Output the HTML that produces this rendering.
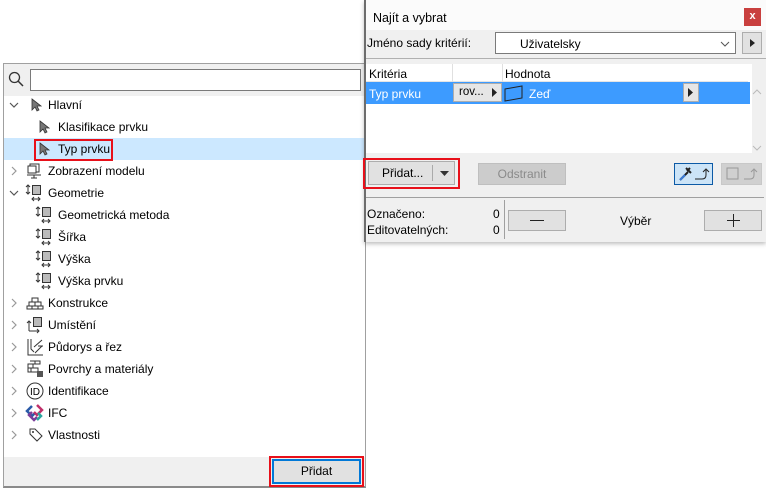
<!DOCTYPE html>
<html><head><meta charset="utf-8"><style>
*{box-sizing:border-box;margin:0;padding:0}
body{width:766px;height:488px;background:#fff;position:relative;overflow:hidden;font-family:"Liberation Sans",sans-serif;font-size:12px;color:#000}
.a{position:absolute}
.row{position:absolute;left:4px;width:360px;height:22px;line-height:22px;white-space:nowrap}
.chev{position:absolute;top:0;width:10px;height:22px}
.btn{position:absolute;background:#e1e1e1;border:1px solid #adadad;text-align:center}
</style></head><body>
<div class="a" style="left:3px;top:63px;width:363px;height:425px;border:1px solid #a0a0a0;border-bottom:2px solid #8a8a8a;background:#fff"></div>
<div class="a" style="left:4px;top:64px;width:361px;height:32px;background:#f0f0f0"></div>
<svg class="a" style="left:7px;top:70px" width="18" height="18"><circle cx="7.5" cy="7.5" r="5" fill="none" stroke="#333" stroke-width="1.3"/><line x1="11" y1="11" x2="16" y2="16" stroke="#333" stroke-width="1.5"/></svg>
<div class="a" style="left:30px;top:69px;width:331px;height:22px;border:1px solid #7a7a7a;background:#fff"></div>
<div class="a" style="left:4px;top:138px;width:361px;height:22px;background:#cce8ff"></div>
<div class="a" style="left:34px;top:139px;width:79px;height:22px;border:2px solid #e8101a"></div>

<div class="row" style="top:94px"><svg class="chev" style="left:5px" viewBox="0 0 10 22"><path d="M1 9l4 4 4-4" fill="none" stroke="#555" stroke-width="1.2"/></svg>
<svg class="a" style="left:26px;top:4px" width="12" height="14"><path d="M2 1v11l3-3 2 4 2-1-2-4h4z" fill="#777" stroke="#333" stroke-width=".8"/></svg><span class="a" style="left:44px">Hlavní</span></div>
<div class="row" style="top:116px"><svg class="a" style="left:34px;top:4px" width="12" height="14"><path d="M2 1v11l3-3 2 4 2-1-2-4h4z" fill="#777" stroke="#333" stroke-width=".8"/></svg><span class="a" style="left:54px">Klasifikace prvku</span></div>
<div class="row" style="top:138px"><svg class="a" style="left:34px;top:4px" width="12" height="14"><path d="M2 1v11l3-3 2 4 2-1-2-4h4z" fill="#777" stroke="#333" stroke-width=".8"/></svg><span class="a" style="left:54px">Typ prvku</span></div>
<div class="row" style="top:160px"><svg class="chev" style="left:5px" viewBox="0 0 10 22"><path d="M3 7l4 4-4 4" fill="none" stroke="#999" stroke-width="1.2"/></svg>
<svg class="a" style="left:22px;top:3px" width="16" height="16"><rect x="4" y="1" width="9" height="8" fill="none" stroke="#333"/><rect x="2" y="3" width="8" height="7" fill="#fff" stroke="#333"/><path d="M1 12h14M8 12v3M5 15h6" stroke="#333" fill="none"/></svg><span class="a" style="left:44px">Zobrazení modelu</span></div>
<div class="row" style="top:182px"><svg class="chev" style="left:5px" viewBox="0 0 10 22"><path d="M1 9l4 4 4-4" fill="none" stroke="#555" stroke-width="1.2"/></svg>
<svg class="a" style="left:21px;top:2px" width="18" height="18"><path d="M3 1v9M1 3l2-2 2 2M1 8l2 2 2-2M7 15h8M9 13l-2 2 2 2M13 13l2 2-2 2" stroke="#333" fill="none"/><rect x="7.5" y="1.5" width="8" height="9" fill="#bbb" stroke="#333"/></svg><span class="a" style="left:44px">Geometrie</span></div>
<div class="row" style="top:204px"><svg class="a" style="left:31px;top:2px" width="18" height="18"><path d="M3 1v9M1 3l2-2 2 2M1 8l2 2 2-2M7 15h8M9 13l-2 2 2 2M13 13l2 2-2 2" stroke="#333" fill="none"/><rect x="7.5" y="1.5" width="8" height="9" fill="#bbb" stroke="#333"/></svg><span class="a" style="left:54px">Geometrická metoda</span></div>
<div class="row" style="top:226px"><svg class="a" style="left:31px;top:2px" width="18" height="18"><path d="M3 1v9M1 3l2-2 2 2M1 8l2 2 2-2M7 15h8M9 13l-2 2 2 2M13 13l2 2-2 2" stroke="#333" fill="none"/><rect x="7.5" y="1.5" width="8" height="9" fill="#bbb" stroke="#333"/></svg><span class="a" style="left:54px">Šířka</span></div>
<div class="row" style="top:248px"><svg class="a" style="left:31px;top:2px" width="18" height="18"><path d="M3 1v9M1 3l2-2 2 2M1 8l2 2 2-2M7 15h8M9 13l-2 2 2 2M13 13l2 2-2 2" stroke="#333" fill="none"/><rect x="7.5" y="1.5" width="8" height="9" fill="#bbb" stroke="#333"/></svg><span class="a" style="left:54px">Výška</span></div>
<div class="row" style="top:270px"><svg class="a" style="left:31px;top:2px" width="18" height="18"><path d="M3 1v9M1 3l2-2 2 2M1 8l2 2 2-2M7 15h8M9 13l-2 2 2 2M13 13l2 2-2 2" stroke="#333" fill="none"/><rect x="7.5" y="1.5" width="8" height="9" fill="#bbb" stroke="#333"/></svg><span class="a" style="left:54px">Výška prvku</span></div>
<div class="row" style="top:292px"><svg class="chev" style="left:5px" viewBox="0 0 10 22"><path d="M3 7l4 4-4 4" fill="none" stroke="#999" stroke-width="1.2"/></svg>
<svg class="a" style="left:22px;top:4px" width="18" height="14"><path d="M6 2h6v4H6zM3 6h12v4H3zM1 10h16v3H1zM9 6v4M6 10v3M12 10v3" fill="none" stroke="#333"/></svg><span class="a" style="left:44px">Konstrukce</span></div>
<div class="row" style="top:314px"><svg class="chev" style="left:5px" viewBox="0 0 10 22"><path d="M3 7l4 4-4 4" fill="none" stroke="#999" stroke-width="1.2"/></svg>
<svg class="a" style="left:22px;top:2px" width="18" height="18"><rect x="7.5" y="1.5" width="8" height="9" fill="#bbb" stroke="#333"/><path d="M3 15V5M1 7l2-2 2 2M3 15h10M11 13l2 2-2 2" stroke="#333" fill="none"/></svg><span class="a" style="left:44px">Umístění</span></div>
<div class="row" style="top:336px"><svg class="chev" style="left:5px" viewBox="0 0 10 22"><path d="M3 7l4 4-4 4" fill="none" stroke="#999" stroke-width="1.2"/></svg>
<svg class="a" style="left:22px;top:2px" width="18" height="18"><path d="M2 1v16h15M5 1v10l3 3M8 9l8-7M9 15l7-7M12 8h5" stroke="#333" fill="none"/></svg><span class="a" style="left:44px">Půdorys a řez</span></div>
<div class="row" style="top:358px"><svg class="chev" style="left:5px" viewBox="0 0 10 22"><path d="M3 7l4 4-4 4" fill="none" stroke="#999" stroke-width="1.2"/></svg>
<svg class="a" style="left:22px;top:2px" width="18" height="18"><path d="M4 1h10v3H2v4h10v4H2V4M7 4v4M5 8v4M9 1v3" fill="none" stroke="#333"/><rect x="11" y="11" width="6" height="6" fill="#555"/></svg><span class="a" style="left:44px">Povrchy a materiály</span></div>
<div class="row" style="top:380px"><svg class="chev" style="left:5px" viewBox="0 0 10 22"><path d="M3 7l4 4-4 4" fill="none" stroke="#999" stroke-width="1.2"/></svg>
<svg class="a" style="left:22px;top:2px" width="18" height="18"><circle cx="9" cy="9" r="8" fill="none" stroke="#333"/><text x="9" y="13" font-size="10" text-anchor="middle" font-family="Liberation Sans">ID</text></svg><span class="a" style="left:44px">Identifikace</span></div>
<div class="row" style="top:402px"><svg class="chev" style="left:5px" viewBox="0 0 10 22"><path d="M3 7l4 4-4 4" fill="none" stroke="#999" stroke-width="1.2"/></svg>
<svg class="a" style="left:21px;top:2px" width="20" height="18"><path d="M7 2l-5 5 5 5 3-3" fill="none" stroke="#2a5ba8" stroke-width="2.5"/><path d="M12 1l5 5-5 5-3-3" fill="none" stroke="#c0306a" stroke-width="2.5"/><path d="M7 8l-3 3 5 5 3-3" fill="none" stroke="#7a3d9a" stroke-width="2.5"/><path d="M13 9l3 3-4 4" fill="none" stroke="#2aa6a0" stroke-width="2.5"/></svg><span class="a" style="left:44px">IFC</span></div>
<div class="row" style="top:424px"><svg class="chev" style="left:5px" viewBox="0 0 10 22"><path d="M3 7l4 4-4 4" fill="none" stroke="#999" stroke-width="1.2"/></svg>
<svg class="a" style="left:24px;top:3px" width="16" height="16"><path d="M2 2h5l7 7-5 5-7-7z" fill="none" stroke="#333"/><circle cx="5" cy="5" r="1" fill="#333"/></svg><span class="a" style="left:44px">Vlastnosti</span></div>

<div class="a" style="left:4px;top:457px;width:361px;height:29px;background:#f0f0f0"></div>
<div class="a" style="left:269px;top:456px;width:95px;height:31px;border:2px solid #e8101a"></div>
<div class="a" style="left:272px;top:459px;width:89px;height:25px;border:2px solid #0078d7;background:#e1e1e1;text-align:center;line-height:21px">Přidat</div>

<div class="a" style="left:364px;top:0;width:402px;height:242px;background:#f0f0f0;border-left:2px solid #6d6d6d;box-shadow:0 2px 4px rgba(0,0,0,.25)"></div>
<div class="a" style="left:366px;top:0;width:400px;height:30px;background:#fbfbfb"></div>
<div class="a" style="left:373px;top:11px;font-size:12.5px">Najít a vybrat</div>
<div class="a" style="left:744px;top:8px;width:17px;height:18px;background:#c9403f;color:#fff;text-align:center;line-height:17px;font-size:11px;font-weight:bold">x</div>
<div class="a" style="left:367px;top:36px">Jméno sady kritérií:</div>
<div class="a" style="left:495px;top:32px;width:241px;height:22px;border:1px solid #7a7a7a;background:#fff"><span class="a" style="left:24px;top:4px">Uživatelsky</span><svg class="a" style="left:224px;top:8px" width="10" height="6"><path d="M1 1l4 4 4-4" fill="none" stroke="#555"/></svg></div>
<div class="btn" style="left:742px;top:32px;width:20px;height:22px"><svg width="18" height="20"><path d="M7 6l5 4-5 4z" fill="#222"/></svg></div>
<div class="a" style="left:366px;top:58px;width:400px;height:1px;background:#b0b0b0"></div>
<div class="a" style="left:366px;top:64px;width:386px;height:89px;background:#fff"></div>
<div class="a" style="left:366px;top:64px;width:382px;height:18px;background:#fff;border-bottom:1px solid #e5e5e5"></div>
<div class="a" style="left:452px;top:64px;width:1px;height:18px;background:#e0e0e0"></div>
<div class="a" style="left:502px;top:64px;width:1px;height:18px;background:#e0e0e0"></div>
<div class="a" style="left:369px;top:67px">Kritéria</div>
<div class="a" style="left:505px;top:67px">Hodnota</div>
<div class="a" style="left:366px;top:82px;width:384px;height:22px;background:#3d9bff"></div>
<div class="a" style="left:369px;top:87px;color:#fff">Typ prvku</div>
<div class="btn" style="left:453px;top:83px;width:49px;height:19px;background:#e6e6e6;font-size:11.5px;line-height:17px;text-align:left;padding-left:5px">rov...<svg class="a" style="left:38px;top:4px" width="6" height="9"><path d="M0 0l5 4.5L0 9z" fill="#222"/></svg></div>
<svg class="a" style="left:504px;top:85px" width="20" height="17"><path d="M1 4l17-3v12L1 16z" fill="none" stroke="#222"/></svg>
<div class="a" style="left:529px;top:87px;color:#fff">Zeď</div>
<div class="btn" style="left:683px;top:83px;width:16px;height:19px;background:#e6e6e6"><svg class="a" style="left:4px;top:4px" width="6" height="9"><path d="M0 0l5 4.5L0 9z" fill="#222"/></svg></div>
<svg class="a" style="left:751px;top:88px" width="12" height="8"><path d="M2 6l4-4 4 4" fill="none" stroke="#bbb"/></svg>
<svg class="a" style="left:751px;top:144px" width="12" height="8"><path d="M2 2l4 4 4-4" fill="none" stroke="#bbb"/></svg>

<div class="a" style="left:363px;top:158px;width:97px;height:31px;border:2px solid #e8101a"></div>
<div class="btn" style="left:368px;top:161px;width:87px;height:24px;line-height:22px"><span class="a" style="left:13px">Přidat...</span><div class="a" style="left:63px;top:3px;width:1px;height:16px;background:#aaa"></div><svg class="a" style="left:71px;top:9px" width="10" height="6"><path d="M0 0h9L4.5 5z" fill="#333"/></svg></div>
<div class="btn" style="left:478px;top:163px;width:88px;height:22px;background:#ccc;border-color:#bfbfbf;color:#8a8a8a;line-height:20px">Odstranit</div>
<div class="a" style="left:674px;top:163px;width:39px;height:22px;border:1px solid #0c5aa6;background:#cce4f7"><svg width="37" height="20"><path d="M5 16l8-8M11 4l5 5M12 7l3-3" stroke="#222" stroke-width="2" fill="none"/><path d="M5 16l5-5" stroke="#3a7bd5" stroke-width="2"/><path d="M20 15h7q4 0 4-4V6M28 8l3-3 3 3" fill="none" stroke="#222"/></svg></div>
<div class="a" style="left:721px;top:163px;width:41px;height:22px;border:1px solid #c8c8c8;background:#d0d0d0"><svg width="39" height="20"><rect x="5" y="4" width="11" height="11" fill="none" stroke="#999"/><path d="M22 15h6q4 0 4-4V6M29 8l3-3 3 3" fill="none" stroke="#999"/></svg></div>
<div class="a" style="left:366px;top:197px;width:398px;height:1px;background:#a0a0a0"></div>
<div class="a" style="left:504px;top:200px;width:1px;height:39px;background:#a0a0a0"></div>
<div class="a" style="left:367px;top:207px">Označeno:</div>
<div class="a" style="left:367px;top:223px">Editovatelných:</div>
<div class="a" style="left:493px;top:207px">0</div>
<div class="a" style="left:493px;top:223px">0</div>
<div class="btn" style="left:508px;top:210px;width:58px;height:21px"><div class="a" style="left:21px;top:9px;width:14px;height:1px;background:#222"></div></div>
<div class="a" style="left:620px;top:214px">Výběr</div>
<div class="btn" style="left:704px;top:210px;width:58px;height:21px"><div class="a" style="left:22px;top:9px;width:13px;height:1px;background:#222"></div><div class="a" style="left:28px;top:3px;width:1px;height:13px;background:#222"></div></div>
</body></html>
